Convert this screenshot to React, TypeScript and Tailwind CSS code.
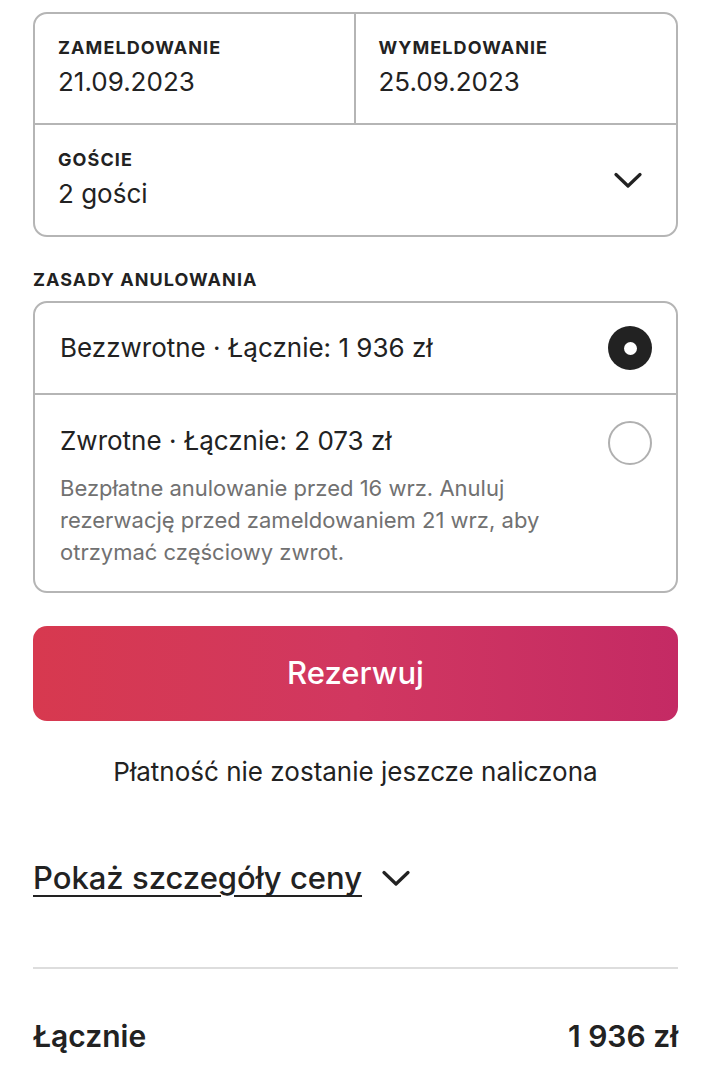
const font = { fontFamily: 'Inter, "Noto Sans", sans-serif' };

function Chevron() {
    return (
        <svg width="28" height="17" viewBox="0 0 28 17" fill="none" className="shrink-0">
            <path d="M2 2.5 L14 14 L26 2.5" stroke="#222222" strokeWidth="3.2" strokeLinecap="round" strokeLinejoin="round" />
        </svg>
    );
}

function Radio({ checked }: { checked: boolean }) {
    if (checked) {
        return (
            <div className="w-[44px] h-[44px] rounded-full bg-[#222222] flex items-center justify-center shrink-0">
                <div className="w-[13px] h-[13px] rounded-full bg-white" />
            </div>
        );
    }
    return <div className="w-[44px] h-[44px] rounded-full border-2 border-[#b0b0b0] shrink-0" />;
}

function Field({ label, value }: { label: string; value: string }) {
    return (
        <div>
            <div className="text-[18px] font-bold leading-[22px] tracking-[0.06em]">{label}</div>
            <div className="text-[26px] leading-[36px] mt-[5px]">{value}</div>
        </div>
    );
}

export default function App() {
    return (
        <div className="min-h-screen bg-white text-[#222222] pl-[33px] pr-[30px] pt-[12px]" style={font}>
            {/* Dates and guests */}
            <div className="border-2 border-[#b5b5b5] rounded-[14px]">
                <div className="grid grid-cols-2 h-[111px] border-b-2 border-[#b5b5b5]">
                    <div className="pl-[23px] pt-[23px] border-r-2 border-[#b5b5b5]">
                        <Field label="ZAMELDOWANIE" value="21.09.2023" />
                    </div>
                    <div className="pl-[23px] pt-[23px]">
                        <Field label="WYMELDOWANIE" value="25.09.2023" />
                    </div>
                </div>
                <div className="h-[110px] pl-[23px] pr-[34px] flex items-center justify-between">
                    <Field label="GOŚCIE" value="2 gości" />
                    <Chevron />
                </div>
            </div>

            {/* Cancellation policy */}
            <div className="mt-[32px] text-[18px] font-bold leading-[22px] tracking-[0.06em]">ZASADY ANULOWANIA</div>
            <div className="mt-[10px] border-2 border-[#b5b5b5] rounded-[14px]">
                <div className="h-[92px] pl-[25px] pr-[24px] flex items-center justify-between border-b-2 border-[#b5b5b5]">
                    <div className="text-[26px] leading-[36px]">Bezzwrotne · Łącznie: 1 936 zł</div>
                    <Radio checked />
                </div>
                <div className="pl-[25px] pr-[24px] pt-[28px] pb-[23px] flex justify-between">
                    <div>
                        <div className="text-[26px] leading-[36px]">Zwrotne · Łącznie: 2 073 zł</div>
                        <div className="mt-[13px] text-[22px] leading-[32px] text-[#717171] max-w-[500px]">
                            Bezpłatne anulowanie przed 16 wrz. Anuluj rezerwację przed zameldowaniem 21 wrz, aby otrzymać częściowy zwrot.
                        </div>
                    </div>
                    <div className="-mt-[2px]">
                        <Radio checked={false} />
                    </div>
                </div>
            </div>

            {/* Reserve */}
            <button className="mt-[33px] block w-full h-[95px] rounded-[14px] bg-gradient-to-r from-[#d7394f] via-[#d13760] to-[#c42a64] text-white text-[31px] font-medium">
                Rezerwuj
            </button>
            <div className="mt-[33px] text-center text-[26px] leading-[36px]">Płatność nie zostanie jeszcze naliczona</div>

            <div className="mt-[68px] h-[40px] flex items-center gap-[20px]">
                <span className="text-[31px] leading-[40px] font-medium underline underline-offset-[6px] decoration-2">Pokaż szczegóły ceny</span>
                <Chevron />
            </div>

            <div className="mt-[69px] border-t-2 border-[#dddddd]" />

            <div className="mt-[47px] h-[40px] flex items-center justify-between text-[30px] leading-[40px] font-semibold">
                <span>Łącznie</span>
                <span>1 936 zł</span>
            </div>
        </div>
    );
}
